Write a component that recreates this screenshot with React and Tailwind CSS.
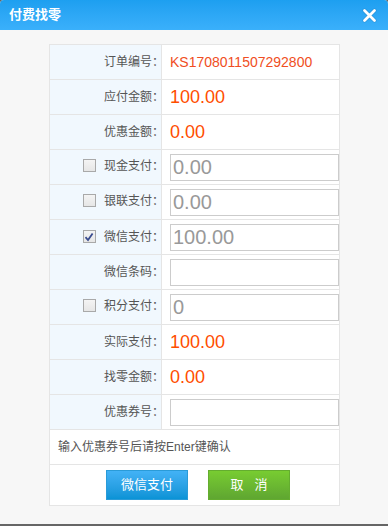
import React, { useState } from "react";

const font = { fontFamily: '"Liberation Sans", "Noto Sans CJK SC", sans-serif' };

const Checkbox = ({ checked, onChange }) => (
  <span
    onClick={onChange}
    className="mr-[8px] inline-flex h-[13px] w-[13px] items-center justify-center border border-[#a9a9a9] bg-gradient-to-b from-[#f4f4f4] to-[#e6e6e6]"
  >
    {checked && (
      <svg width="10" height="10" viewBox="0 0 10 10">
        <path d="M1.5 5.2 L4 8 L8.6 1.5" stroke="#3b4d8f" strokeWidth="1.8" fill="none" />
      </svg>
    )}
  </span>
);

const Row = ({ label, check, checked, onCheck, children }) => (
  <tr className="h-[35px]">
    <td className="border border-[#e5e5e5] bg-[#f1f8fe] pr-0 text-right text-[12px] text-[#555]">
      <span className="mr-[-3px] inline-flex items-center">
        {check && <Checkbox checked={checked} onChange={onCheck} />}
        {label}：
      </span>
    </td>
    <td className="border border-[#e5e5e5] pl-[8px] pr-0">{children}</td>
  </tr>
);

const Input = ({ value, onChange }) => (
  <input
    value={value}
    onChange={onChange}
    className="block h-[27px] w-[169px] border border-[#cccccc] bg-white px-[2px] text-[20px] leading-none text-[#999] outline-none"
    style={font}
  />
);

export default function App() {
  const [checks, setChecks] = useState({ cash: false, union: false, wx: true, points: false });
  const [vals, setVals] = useState({ cash: "0.00", union: "0.00", wx: "100.00", code: "", points: "0", coupon: "" });

  const toggle = (k) => setChecks((p) => ({ ...p, [k]: !p[k] }));
  const set = (k) => (e) => setVals((p) => ({ ...p, [k]: e.target.value }));

  return (
    <div className="h-[526px] w-[388px] bg-[#666]" style={font}>
      <div className="flex h-[524px] flex-col overflow-hidden rounded-t-[4px] bg-[#f7f7f7]">
        {/* title bar */}
        <div className="flex h-[30px] shrink-0 items-center justify-between bg-gradient-to-b from-[#1d9ff0] to-[#3ab0fb] pl-[9px] pr-[11px]">
          <span className="text-[13px] font-bold text-white">付费找零</span>
          <svg width="15" height="15" viewBox="0 0 15 15">
            <path d="M2.5 2.5 L12.5 12.5 M12.5 2.5 L2.5 12.5" stroke="#1a6fa8" strokeWidth="4" strokeLinecap="round" opacity="0.35" />
            <path d="M2.5 2.5 L12.5 12.5 M12.5 2.5 L2.5 12.5" stroke="white" strokeWidth="2.8" strokeLinecap="round" />
          </svg>
        </div>

        <div className="pl-[49px] pt-[14px]">
          <table className="w-[291px] border-collapse bg-white">
            <colgroup>
              <col className="w-[112px]" />
              <col />
            </colgroup>
            <tbody>
              <Row label="订单编号">
                <span className="text-[14px] text-[#f04e23]">KS1708011507292800</span>
              </Row>
              <Row label="应付金额">
                <span className="text-[18px] text-[#ff4d00]">100.00</span>
              </Row>
              <Row label="优惠金额">
                <span className="text-[18px] text-[#ff4d00]">0.00</span>
              </Row>
              <Row label="现金支付" check checked={checks.cash} onCheck={() => toggle("cash")}>
                <Input value={vals.cash} onChange={set("cash")} />
              </Row>
              <Row label="银联支付" check checked={checks.union} onCheck={() => toggle("union")}>
                <Input value={vals.union} onChange={set("union")} />
              </Row>
              <Row label="微信支付" check checked={checks.wx} onCheck={() => toggle("wx")}>
                <Input value={vals.wx} onChange={set("wx")} />
              </Row>
              <Row label="微信条码">
                <Input value={vals.code} onChange={set("code")} />
              </Row>
              <Row label="积分支付" check checked={checks.points} onCheck={() => toggle("points")}>
                <Input value={vals.points} onChange={set("points")} />
              </Row>
              <Row label="实际支付">
                <span className="text-[18px] text-[#ff4d00]">100.00</span>
              </Row>
              <Row label="找零金额">
                <span className="text-[18px] text-[#ff4d00]">0.00</span>
              </Row>
              <Row label="优惠券号">
                <Input value={vals.coupon} onChange={set("coupon")} />
              </Row>
              <tr className="h-[35px]">
                <td colSpan={2} className="border border-[#e5e5e5] pl-[8px] text-[12px] text-[#555]">
                  输入优惠券号后请按Enter键确认
                </td>
              </tr>
              <tr className="h-[41px]">
                <td colSpan={2} className="border border-[#e5e5e5]">
                  <div className="flex justify-center gap-[20px] pl-[7px]">
                    <button className="h-[30px] w-[82px] border border-[#2a9bd8] bg-gradient-to-b from-[#42b2f6] to-[#0993d6] text-[13px] text-white">
                      微信支付
                    </button>
                    <button className="h-[30px] w-[82px] border border-[#64ad2f] bg-gradient-to-b from-[#78cc31] to-[#5fa631] text-[13px] text-white">
                      取&nbsp;&nbsp;&nbsp;消
                    </button>
                  </div>
                </td>
              </tr>
            </tbody>
          </table>
        </div>
      </div>
    </div>
  );
}
